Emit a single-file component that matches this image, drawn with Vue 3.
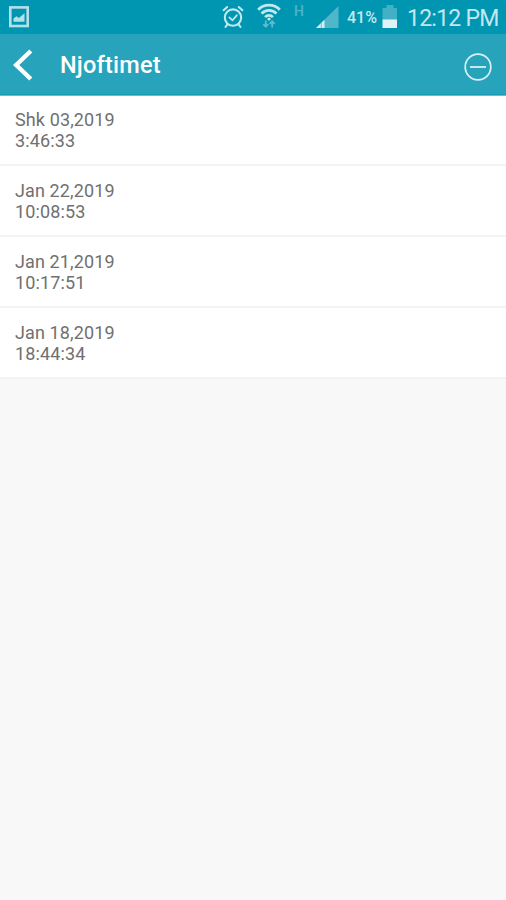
<script setup>
const notifications = [
  { date: 'Shk 03,2019', time: '3:46:33' },
  { date: 'Jan 22,2019', time: '10:08:53' },
  { date: 'Jan 21,2019', time: '10:17:51' },
  { date: 'Jan 18,2019', time: '18:44:34' },
]
</script>

<template>
  <div class="screen">
    <div class="status">
      <svg class="picture" width="20" height="22" viewBox="0 0 20 22">
        <rect x="1.3" y="1.4" width="17.4" height="18.6" fill="none" stroke="#b5e0e9" stroke-width="2.6" />
        <path d="M4.5 15.8v-3.3l3-2.2 2.4 1.6 5.6-4.6v8.5z" fill="#b5e0e9" />
      </svg>
      <svg class="alarm" width="22" height="24" viewBox="0 0 22 24" fill="none" stroke="#c3e7ee" stroke-width="2.1" stroke-linecap="round">
        <circle cx="11" cy="12.6" r="8.2" />
        <path d="M1.6 5.2 5.2 2M20.4 5.2 16.8 2M5.4 19.4 3.5 22M16.6 19.4l1.9 2.6" />
        <path d="m7.4 12.4 3 2.9 4.4-5" stroke-width="1.8" />
      </svg>
      <svg class="wifi" width="24" height="26" viewBox="0 0 24 26" fill="none" stroke="#c3e7ee" stroke-width="2.8">
        <path d="M1.2 6.8C7 .6 17 .6 22.8 6.8M4.6 10.6c4-4.4 10.8-4.4 14.8 0M8.1 14.1c2.2-2.3 5.6-2.3 7.8 0" />
        <circle cx="12" cy="16" r="1.6" fill="#c3e7ee" stroke="none" />
        <path d="M8.8 17.5v6M6.3 21.1l2.5 2.7 2.5-2.7M15.2 24.5v-6M12.7 20.9l2.5-2.7 2.5 2.7" stroke="#5dbbcc" stroke-width="1.8" />
      </svg>
      <span class="network">H</span>
      <svg class="signal" width="23" height="23" viewBox="0 0 23 23">
        <path d="M0 22 22.5 0v22z" fill="#50b6c9" />
        <path d="M0 22 8.5 13.7V22z" fill="#d4edf2" />
        <path d="M5.3 16v6" stroke="#50b6c9" stroke-width=".8" />
      </svg>
      <span class="percent">41%</span>
      <svg class="battery" width="16" height="24" viewBox="0 0 16 24">
        <path d="M4.5 0h7v3H15v12H.5V3h4z" fill="#43b1c5" />
        <path d="M.5 14.5H15V23H.5z" fill="#e0f2f5" />
      </svg>
      <span class="clock">12:12 PM</span>
    </div>
    <header class="bar">
      <svg class="back" width="20" height="32" viewBox="0 0 20 32">
        <path d="M17.8 2 3.2 16l14.6 14" fill="none" stroke="#fff" stroke-width="4.4" />
      </svg>
      <h1 class="title">Njoftimet</h1>
      <svg class="remove" width="28" height="28" viewBox="0 0 28 28" fill="none" stroke="#d8f1f5">
        <circle cx="14" cy="14" r="12.8" stroke-width="1.7" />
        <path d="M6 14h16" stroke-width="1.8" />
      </svg>
    </header>
    <ul class="list">
      <li v-for="item in notifications" :key="item.date" class="row">
        <div>{{ item.date }}</div>
        <div>{{ item.time }}</div>
      </li>
    </ul>
  </div>
</template>

<style>
body {
  margin: 0;
  background: #f8f8f8;
}
</style>

<style scoped>
.screen {
  height: 900px;
  background: #f8f8f8;
  font-family: Roboto, "Liberation Sans", sans-serif;
}
.status {
  display: flex;
  align-items: flex-start;
  box-sizing: border-box;
  height: 34px;
  padding-left: 9px;
  background: #0096b2;
  color: #c3e7ee;
  white-space: nowrap;
}
.status svg,
.bar svg {
  flex: none;
}
.picture { margin-top: 6px; }
.alarm { margin: 5px 0 0 193px; }
.wifi { margin: 3px 0 0 13px; }
.network {
  width: 22px;
  margin: 3px 0 0 13px;
  color: #4db5c8;
  font-size: 14px;
  font-weight: 500;
  line-height: 16px;
}
.signal { margin-top: 6px; }
.percent {
  width: 35px;
  margin: 8px 0 0 8px;
  font-size: 16px;
  font-weight: 500;
  line-height: 20px;
}
.battery { margin-top: 5px; }
.clock {
  margin: 5px 0 0 9px;
  font-size: 23px;
  letter-spacing: -0.75px;
  line-height: 28px;
}
.bar {
  display: flex;
  align-items: center;
  box-sizing: border-box;
  height: 62px;
  padding: 0 14px 0 13px;
  background: #27a4bc;
  border-bottom: 1px solid #5cc3d6;
  box-shadow: inset 0 -1px #189cb5;
}
.title {
  flex: 1;
  margin: 0 0 0 27px;
  color: #fff;
  font-size: 23.5px;
  font-weight: 500;
  letter-spacing: 0.2px;
  line-height: 30px;
}
.remove {
  position: relative;
  top: 2px;
}
.list {
  margin: 0;
  padding: 0;
  list-style: none;
}
.row {
  box-sizing: border-box;
  height: 71px;
  padding: 14px 15px 0;
  background: #fff;
  border-bottom: 2px solid #f3f3f3;
  color: #707070;
  font-size: 18px;
  letter-spacing: 0.12px;
  line-height: 21.4px;
}
.row > div {
  height: 21px;
}
.row:first-child {
  height: 70px;
  padding-top: 13px;
}
</style>
